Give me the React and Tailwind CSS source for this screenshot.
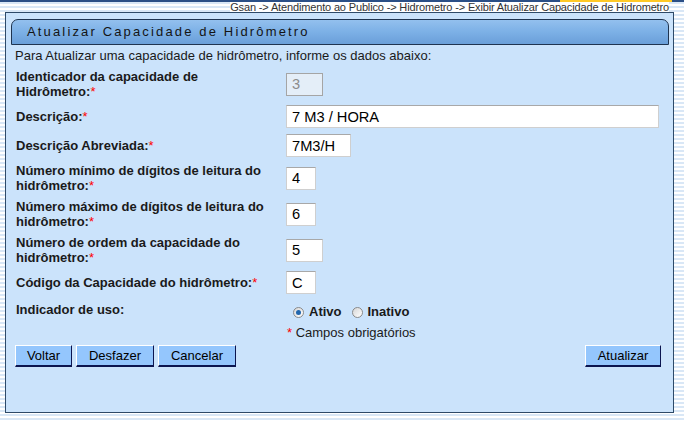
import React from 'react'

const rows = [
  { label: ['Identicador da capacidade de', 'Hidrômetro:'], value: '3', w: 'w-[37px]', h: 'h-[36px]', disabled: true },
  { label: ['Descrição:'], value: '7 M3 / HORA', w: 'w-[373px]', h: 'h-[29px]' },
  { label: ['Descrição Abreviada:'], value: '7M3/H', w: 'w-[65px]', h: 'h-[29px]' },
  { label: ['Número mínimo de dígitos de leitura do', 'hidrômetro:'], value: '4', w: 'w-[30px]', h: 'h-[36px]' },
  { label: ['Número máximo de dígitos de leitura do', 'hidrômetro:'], value: '6', w: 'w-[30px]', h: 'h-[36px]' },
  { label: ['Número de ordem da capacidade do', 'hidrômetro:'], value: '5', w: 'w-[37px]', h: 'h-[36px]' },
  { label: ['Código da Capacidade do hidrômetro:'], value: 'C', w: 'w-[30px]', h: 'h-[29px]' },
]

function Req() {
  return <span className="text-[#ff0000] font-normal">*</span>
}

function Radio({ checked }) {
  return (
    <span className="w-[11px] h-[11px] rounded-full border border-[#8a8a8a] bg-gradient-to-br from-[#d6d6d6] to-[#ffffff] flex items-center justify-center">
      {checked && <span className="w-[5px] h-[5px] rounded-full bg-[#2166ad]" />}
    </span>
  )
}

function Btn({ children, w }) {
  return (
    <button
      className={`${w} h-[22px] bg-[#94c6fd] border border-t-white border-l-white border-r-[#0b1550] border-b-2 border-b-[#0b1550] text-[13px] text-black leading-none`}
    >
      {children}
    </button>
  )
}

export default function App() {
  return (
    <div className="w-[684px] h-[421px] overflow-hidden bg-[repeating-linear-gradient(180deg,#ffffff_0px,#ffffff_2px,#d9e7f6_2px,#d9e7f6_4px)] font-['Liberation_Sans',Arial,sans-serif] text-[#1a1a1a]">
      <div className="flex h-[2px]">
        <div className="flex-1 bg-[#2b4f86]" />
        <div className="w-[112px] bg-[#ffc926]" />
        <div className="w-[12px] bg-[#2b4f86]" />
      </div>
      <div className="h-[10px] flex justify-end pr-[15px]">
        <span className="text-[11px] leading-[10px] text-[#333] bg-white font-['Liberation_Sans_Narrow','Liberation_Sans',sans-serif] tracking-[-0.15px]">
          Gsan -&gt; Atendimento ao Publico -&gt; Hidrometro -&gt; Exibir Atualizar Capacidade de Hidrometro
        </span>
      </div>

      <div className="ml-[5px] w-[669px] h-[401px] border border-[#2e4a68] bg-[#cbe3fb] pt-[6px]">
        <div className="ml-[5px] w-[658px] h-[26px] border border-[#1f3450] rounded-tl-[7px] rounded-tr-[7px] bg-gradient-to-b from-[#93c0ee] via-[#7cb0e6] to-[#6a9fd9] flex items-center pl-[15px]">
          <span className="text-[13px] tracking-[2.15px] text-[#141414]">Atualizar Capacidade de Hidrômetro</span>
        </div>

        <div className="pl-[9px] mt-[3px] text-[13px] leading-[16px]">
          Para Atualizar uma capacidade de hidrômetro, informe os dados abaixo:
        </div>

        <div className="mt-[2px] pl-[10px] flex flex-col">
          {rows.map((r, i) => (
            <div key={i} className={`flex items-center ${r.h}`}>
              <div className="w-[270px] text-[13px] font-bold leading-[15px]">
                {r.label.map((l, j) => (
                  <div key={j}>
                    {l}
                    {j === r.label.length - 1 && <Req />}
                  </div>
                ))}
              </div>
              <div
                className={`${r.w} h-[23px] border flex items-center pl-[5px] text-[14.67px] ${
                  r.disabled
                    ? 'border-[#a5a5a5] bg-[#e4eef8] text-[#8c8c8c]'
                    : 'border-[#cfcfcf] border-t-[#a8a8a8] bg-white text-black'
                }`}
              >
                {r.value}
              </div>
            </div>
          ))}

          <div className="flex items-center h-[30px]">
            <div className="w-[270px] text-[13px] font-bold -mt-[4px]">Indicador de uso:</div>
            <div className="flex items-center pl-[7px] text-[13px] font-bold">
              <Radio checked />
              <span className="ml-[5px]">Ativo</span>
              <span className="ml-[10px]"><Radio /></span>
              <span className="ml-[5px]">Inativo</span>
            </div>
          </div>

          <div className="flex items-center h-[12px]">
            <div className="w-[270px]" />
            <div className="pl-[1px] text-[13px] leading-[12px]">
              <Req /> Campos obrigatórios
            </div>
          </div>
        </div>

        <div className="mt-[6px] pl-[9px] pr-[12px] flex items-center">
          <div className="flex gap-[4px]">
            <Btn w="w-[57px]">Voltar</Btn>
            <Btn w="w-[78px]">Desfazer</Btn>
            <Btn w="w-[78px]">Cancelar</Btn>
          </div>
          <div className="flex-1" />
          <Btn w="w-[76px]">Atualizar</Btn>
        </div>
      </div>
    </div>
  )
}
